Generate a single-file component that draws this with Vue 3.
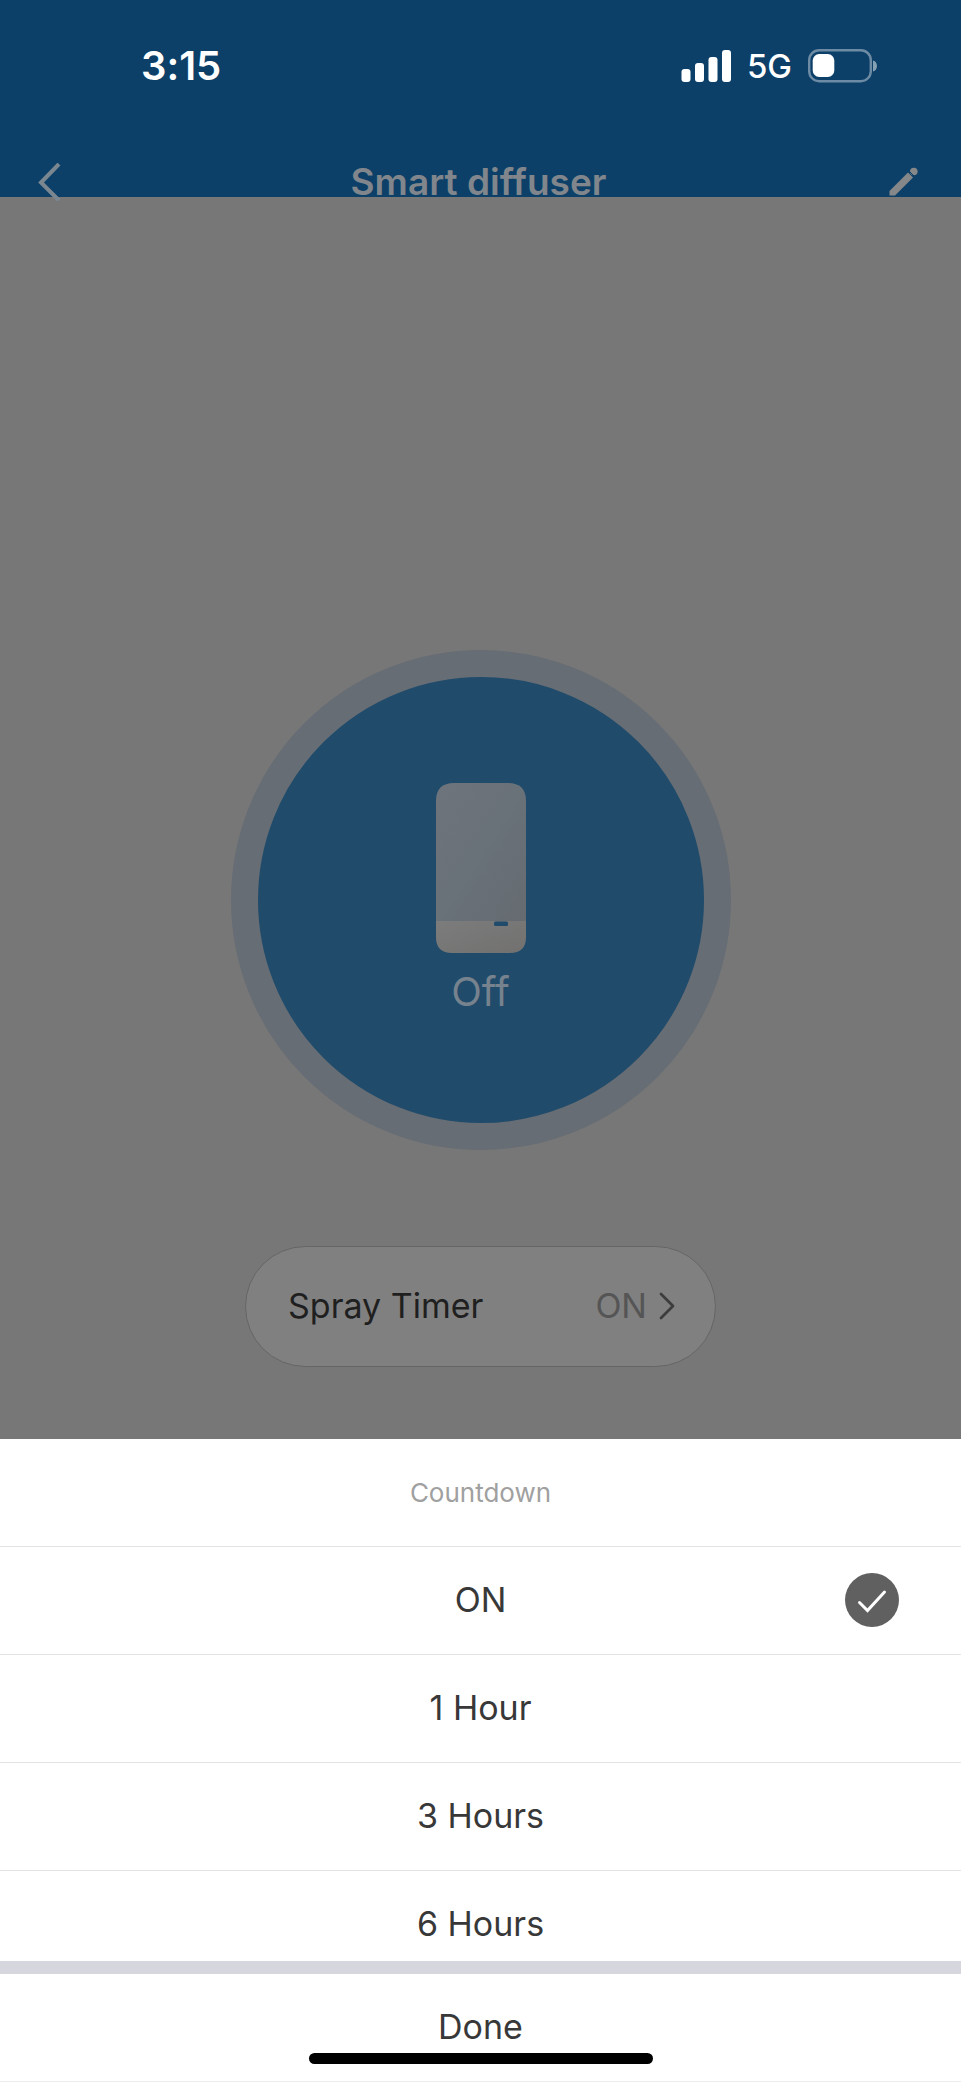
<script setup>
import { ref } from 'vue'

const options = ['ON', '1 Hour', '3 Hours', '6 Hours']
const selected = ref('ON')
</script>

<template>
  <div class="screen">
    <header class="header">
      <div class="status">
        <time class="clock">3:15</time>
        <div class="indicators">
          <svg class="signal" width="50" height="32" viewBox="0 0 50 32" aria-hidden="true">
            <rect x="0.5" y="19" width="9" height="13" rx="3" />
            <rect x="14" y="13" width="9" height="19" rx="3" />
            <rect x="27.500" y="7" width="9" height="25" rx="3" />
            <rect x="41" y="0" width="9" height="32" rx="3" />
          </svg>
          <span class="network">5G</span>
          <svg width="70" height="34" viewBox="0 0 70 34" aria-hidden="true">
            <rect x="1.2" y="1.2" width="61.6" height="31" rx="10" fill="none" stroke="#6d8ba4" stroke-width="2.4" />
            <rect x="4.7" y="5" width="21.6" height="23" rx="6.5" fill="#fff" />
            <path d="M65 11.5c5.300 1 5.300 10 0 11z" fill="#86a0b4" />
          </svg>
        </div>
      </div>
      <nav class="nav">
        <button class="icon-button" aria-label="Back">
          <svg width="24" height="38" viewBox="0 0 24 38" aria-hidden="true">
            <path d="M21 1 3 19.500 21 37.500" fill="none" stroke="#7b8790" stroke-width="4" />
          </svg>
        </button>
        <h1 class="title">Smart diffuser</h1>
        <button class="icon-button" aria-label="Edit">
          <svg width="30" height="36" viewBox="0 0 30 36" aria-hidden="true" fill="#858789">
            <path d="M.5 31.500V27L19 8.500l5 5L6 31.500z" />
            <circle cx="24.800" cy="7.500" r="3.800" />
            <path d="m20.500 7.500 5 5" fill="none" stroke="#0d4068" stroke-width="1" />
          </svg>
        </button>
      </nav>
    </header>

    <main class="main">
      <button class="power">
        <svg width="90" height="170" viewBox="0 0 90 170" aria-hidden="true">
          <defs>
            <linearGradient id="tank" x1="0" y1="0" x2="1" y2="1">
              <stop offset="0" stop-color="#6e747b" />
              <stop offset=".5" stop-color="#697179" />
              <stop offset="1" stop-color="#656b70" />
            </linearGradient>
            <linearGradient id="base" x1="0" y1="0" x2="1" y2="1">
              <stop offset="0" stop-color="#7c7c7c" />
              <stop offset="1" stop-color="#727170" />
            </linearGradient>
          </defs>
          <path d="M0 138V18Q0 0 18 0h54q18 0 18 18v120z" fill="url(#tank)" />
          <path d="M0 138h90v16q0 16-16 16H16q-16 0-16-16z" fill="url(#base)" />
          <rect x="58" y="138.500" width="14" height="4.500" rx="1.500" fill="#204b6b" />
        </svg>
        <span class="power-label">Off</span>
      </button>

      <button class="timer">
        <span>Spray Timer</span>
        <span class="timer-value">
          ON
          <svg width="16" height="28" viewBox="0 0 16 28" aria-hidden="true">
            <path d="M2 2 14 14 2 26" fill="none" stroke="#3c3c3c" stroke-width="2.800" stroke-linecap="round" stroke-linejoin="round" />
          </svg>
        </span>
      </button>
    </main>

    <section class="sheet" aria-labelledby="sheet-title">
      <h2 id="sheet-title" class="sheet-title">Countdown</h2>
      <div class="options" role="radiogroup" aria-labelledby="sheet-title">
        <label v-for="option in options" :key="option" class="option">
          <span class="option-name">{{ option }}</span>
          <span class="mark">
            <input v-model="selected" class="radio" type="radio" name="countdown" :value="option" />
            <svg v-if="selected === option" class="tick" width="54" height="54" viewBox="0 0 54 54" aria-hidden="true">
              <path d="M14.500 29.500 22.500 37.500 39.500 19" fill="none" stroke="#fff" stroke-width="3" stroke-linecap="round" />
            </svg>
          </span>
        </label>
      </div>
      <button class="done">Done</button>
      <div class="home-indicator"></div>
    </section>
  </div>
</template>

<style>
body {
  margin: 0;
}
</style>

<style scoped>
.screen {
  display: flex;
  flex-direction: column;
  min-height: 100vh;
  background: #777;
  color: #383838;
  font-family: Inter, "Liberation Sans", sans-serif;
  font-size: 34px;
  font-variant-ligatures: none;
  line-height: 44px;
}

button {
  padding: 0;
  border: 0;
  background: none;
  color: inherit;
  font: inherit;
  font-variant-ligatures: none;
  cursor: pointer;
}

svg {
  display: block;
  flex: none;
}

.header {
  height: 197px;
  background: #0d4068;
}

.status {
  display: flex;
  align-items: center;
  justify-content: space-between;
  height: 131px;
  padding: 0 83px 0 141px;
  color: #fff;
}

.clock {
  font-size: 40px;
  font-weight: 600;
}

.indicators {
  display: flex;
  align-items: center;
  gap: 16px;
}

.signal {
  fill: #fff;
}

.network {
  font-size: 33px;
  font-weight: 500;
}

.nav {
  display: grid;
  grid-template-columns: 1fr auto 1fr;
  align-items: center;
  height: 101px;
  padding: 0 42px 0 38px;
}

.icon-button {
  display: flex;
  justify-self: start;
}

.icon-button:last-child {
  justify-self: end;
}

.title {
  margin: 0;
  color: #80868b;
  font-size: 37px;
  font-weight: 600;
}

.main {
  display: flex;
  flex: 1;
  flex-direction: column;
  align-items: center;
  justify-content: flex-end;
  gap: 96px;
  padding: 24px 24px 72px;
}

.power {
  display: flex;
  flex-direction: column;
  align-items: center;
  gap: 17px;
  box-sizing: border-box;
  width: 500px;
  height: 500px;
  padding-top: 106px;
  border: 27px solid #666d74;
  border-radius: 50%;
  background: #204b6b;
}

.power-label {
  color: #76828d;
  font-size: 40px;
}

.timer {
  display: flex;
  align-items: center;
  justify-content: space-between;
  box-sizing: border-box;
  width: 100%;
  max-width: 471px;
  height: 121px;
  padding: 0 40px 2px 42px;
  border: 1px solid #656565;
  border-radius: 61px;
  background: #808080;
  color: #1f1f1f;
}

.timer-value {
  display: flex;
  align-items: center;
  gap: 12px;
  color: #555;
}

.sheet {
  position: relative;
  background: #fff;
}

.sheet-title {
  margin: 0;
  padding: 32px 0 31px;
  border-bottom: 1px solid #e4e4e6;
  color: #a0a0a0;
  font-size: 26px;
  font-weight: 400;
  text-align: center;
}

.options {
  max-height: 414px;
  overflow: hidden;
}

.option {
  display: grid;
  grid-template-columns: 1fr auto 1fr;
  align-items: center;
  box-sizing: border-box;
  height: 108px;
  padding: 0 62px 2px;
  border-bottom: 1px solid #e4e4e6;
  cursor: pointer;
}

.option-name {
  grid-column: 2;
}

.mark {
  display: grid;
  justify-self: end;
}

.radio,
.tick {
  grid-area: 1 / 1;
}

.radio {
  appearance: none;
  width: 54px;
  height: 54px;
  margin: 0;
  border-radius: 50%;
}

.radio:checked {
  background: #606060;
}

.tick {
  pointer-events: none;
}

.done {
  width: 100%;
  height: 121px;
  padding-bottom: 2px;
  border-top: 13px solid #d6d6df;
  border-bottom: 1px solid #ececec;
}

.home-indicator {
  position: absolute;
  bottom: 18px;
  left: 50%;
  width: 344px;
  height: 11px;
  margin-left: -172px;
  border-radius: 6px;
  background: #000;
}
</style>
